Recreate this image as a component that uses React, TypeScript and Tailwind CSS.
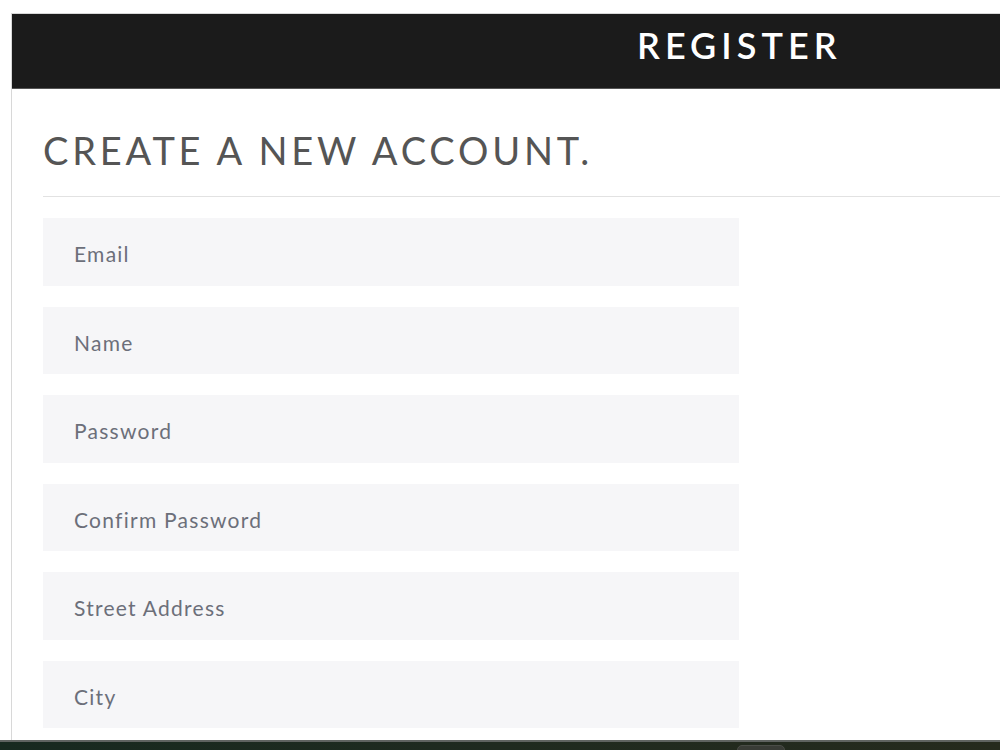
import React from "react";

const fields = ["Email", "Name", "Password", "Confirm Password", "Street Address", "City"];

export default function App() {
  return (
    <div className="h-[750px] w-[1000px] overflow-hidden flex flex-col bg-white" style={{ fontFamily: "Lato, 'Noto Sans', sans-serif" }}>
      <div className="flex-1 overflow-hidden pt-[13px]">
        <div className="ml-[11px] w-[1100px] h-full border-l border-t border-[#d8d8d8]">
          <div className="h-[75px] bg-[#1b1b1b] border-b border-[#555] flex items-center pl-[625px] pb-[12px]">
            <span className="text-white text-[36px] font-semibold tracking-[0.14em] leading-none">REGISTER</span>
          </div>
          <div className="pl-[31px]">
            <h1 className="pt-[42px] pb-[27px] text-[38px] leading-none text-[#555555] tracking-[0.1em] font-normal">
              CREATE A NEW ACCOUNT.
            </h1>
            <div className="h-px bg-[#e2e2e2]" />
            <div className="flex flex-col gap-[21.1px] pt-[21px] w-[696px]">
              {fields.map((f) => (
                <div key={f} className="h-[67.5px] bg-[#f6f6f8] flex items-center pl-[31px] pt-[4px]">
                  <span className="text-[21px] text-[#6c6f7a] font-normal tracking-[0.06em]">{f}</span>
                </div>
              ))}
            </div>
          </div>
        </div>
      </div>
      <div className="h-[10px] border-t-2 border-[#5f6360] bg-gradient-to-r from-[#17291f] via-[#1f2a1f] to-[#252a1d] relative">
        <div className="absolute left-[737px] top-[3px] w-[48px] h-[10px] rounded-t-[5px] bg-[#393c36] border border-[#4a4d47]" />
      </div>
    </div>
  );
}
